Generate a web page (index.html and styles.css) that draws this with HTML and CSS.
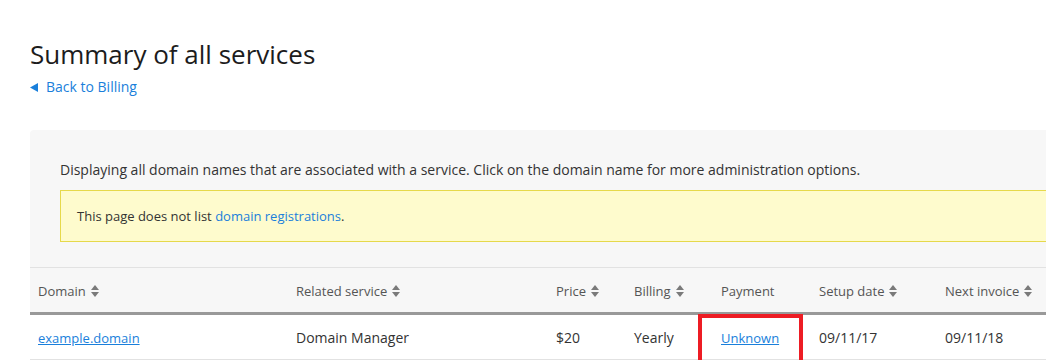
FILE: index.html
```html
<!DOCTYPE html>
<html>
<head>
<meta charset="utf-8">
<link rel="stylesheet" href="styles.css">
</head>
<body>
<div class="page">
  <h1 class="title">Summary of all services</h1>
  <a class="back" href="#"><svg class="back-icon" width="8" height="9" viewBox="0 0 8 9"><path d="M8 0 L0 4.5 L8 9 Z" fill="currentColor"/></svg>Back to Billing</a>
  <div class="panel">
    <p class="intro">Displaying all domain names that are associated with a service. Click on the domain name for more administration options.</p>
    <div class="notice">This page does not list <a href="#" class="plain-link">domain registrations</a>.</div>
    <table class="services">
      <colgroup>
        <col class="c-domain"><col class="c-service"><col class="c-price"><col class="c-billing"><col class="c-payment"><col class="c-setup"><col class="c-next">
      </colgroup>
      <thead>
        <tr>
          <th>Domain<span class="sort"></span></th>
          <th>Related service<span class="sort"></span></th>
          <th>Price<span class="sort"></span></th>
          <th>Billing<span class="sort"></span></th>
          <th>Payment</th>
          <th>Setup date<span class="sort"></span></th>
          <th>Next invoice<span class="sort"></span></th>
        </tr>
      </thead>
      <tbody>
        <tr>
          <td><a href="#" class="ul-link">example.domain</a></td>
          <td>Domain Manager</td>
          <td>$20</td>
          <td>Yearly</td>
          <td class="payment"><a href="#" class="ul-link">Unknown</a><span class="highlight"></span></td>
          <td>09/11/17</td>
          <td>09/11/18</td>
        </tr>
      </tbody>
    </table>
  </div>
</div>
</body>
</html>
```

FILE: styles.css
```css
html, body {
  margin: 0;
  padding: 0;
  background: #ffffff;
  overflow: hidden;
}
body {
  font-family: "Open Sans", "Liberation Sans", sans-serif;
  font-size: 14px;
  line-height: 20px;
  color: #333333;
}
.page {
  width: 1100px;
  padding-left: 30px;
}
.title {
  margin: 0;
  padding-top: 36px;
  font-size: 26px;
  line-height: 36px;
  font-weight: 400;
  color: #1c1c1c;
}
.back {
  display: flex;
  align-items: center;
  margin-top: 5px;
  color: #1a7fdb;
  text-decoration: none;
  width: max-content;
}
.back-icon {
  margin-right: 8px;
  color: #1a7fdb;
}
.panel {
  margin-top: 33px;
  background: #f7f7f7;
  border-radius: 4px 0 0 0;
  padding-top: 30px;
}
.intro {
  margin: 0 0 10px 30px;
}
.notice {
  margin-left: 30px;
  background: #fefbcd;
  border: 1px solid #e6d94b;
  padding: 15px 16px;
  font-size: 13px;
}
.plain-link {
  color: #1a7fdb;
  text-decoration: none;
}
.services {
  margin-top: 25px;
  width: 100%;
  border-collapse: collapse;
  border-top: 1px solid #e2e2e2;
}
.c-domain { width: 258px; }
.c-service { width: 260px; }
.c-price { width: 78px; }
.c-billing { width: 87px; }
.c-payment { width: 98px; }
.c-setup { width: 126px; }
.services th {
  text-align: left;
  font-weight: 400;
  font-size: 13px;
  color: #555555;
  padding: 13px 8px 11px;
  border-bottom: 3px solid #999999;
  white-space: nowrap;
}
.services td {
  background: #ffffff;
  padding: 13px 8px 11px;
  border-bottom: 1px solid #e2e2e2;
  white-space: nowrap;
}
.sort {
  display: inline-block;
  position: relative;
  width: 8px;
  height: 12px;
  margin-left: 5px;
  vertical-align: -1px;
}
.sort::before, .sort::after {
  content: "";
  position: absolute;
  left: 0;
  border-left: 4px solid transparent;
  border-right: 4px solid transparent;
}
.sort::before {
  top: 0;
  border-bottom: 5px solid #7a7a7a;
}
.sort::after {
  bottom: 0;
  border-top: 5px solid #7a7a7a;
}
.ul-link {
  color: #1a7fdb;
  text-decoration: underline;
  font-size: 13px;
}
.payment {
  position: relative;
}
.highlight {
  position: absolute;
  left: -15px;
  top: -1px;
  width: 97px;
  height: 46px;
  border: 4px solid #ed1c24;
}
```
